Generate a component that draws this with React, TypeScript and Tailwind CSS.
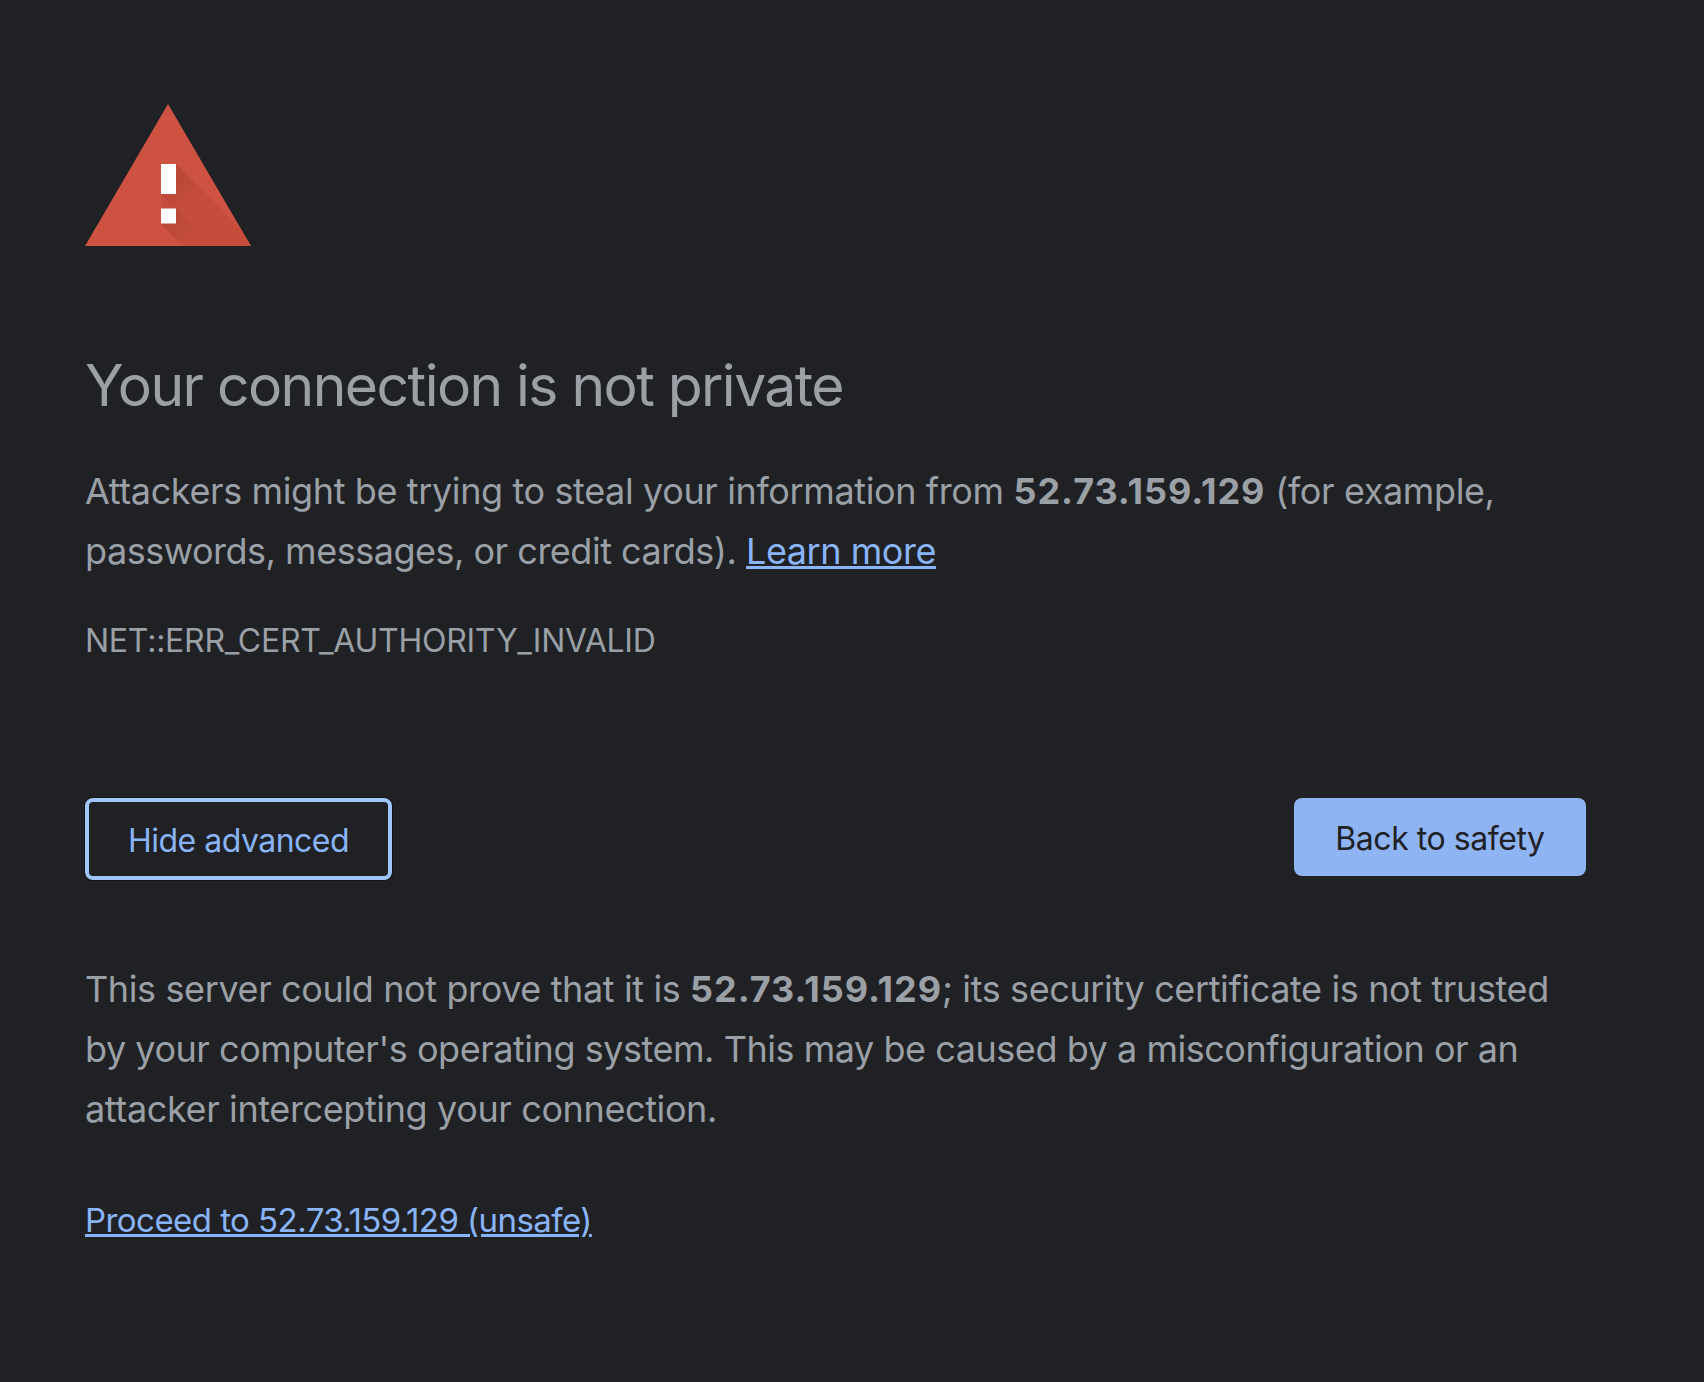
function WarningIcon() {
  return (
    <svg width="166" height="143" viewBox="0 0 166 143" className="block">
      <defs>
        <linearGradient id="barShadow" gradientUnits="userSpaceOnUse" x1="84" y1="75" x2="108" y2="99">
          <stop offset="0" stopColor="#b04434" stopOpacity="0.7" />
          <stop offset="1" stopColor="#b04434" stopOpacity="0" />
        </linearGradient>
        <linearGradient id="dotShadow" gradientUnits="userSpaceOnUse" x1="84" y1="112" x2="106" y2="134">
          <stop offset="0" stopColor="#b04434" stopOpacity="0.7" />
          <stop offset="1" stopColor="#b04434" stopOpacity="0" />
        </linearGradient>
      </defs>
      <polygon points="83,0 166,142 0,142" fill="#cd5241" />
      <polygon points="91,60 155,124 166,142 98,142 76,120 76,90" fill="#c64d3b" />
      <polygon points="91,60 121,90 106,120 76,90" fill="url(#barShadow)" />
      <polygon points="91,105 113,127 98.5,142 98,142 76,120" fill="url(#dotShadow)" />
      <rect x="76" y="60" width="15" height="30" fill="#ffffff" />
      <rect x="76" y="104.5" width="15" height="15" fill="#ffffff" />
    </svg>
  )
}

export default function App() {
  return (
    <div className="min-h-[1382px] bg-[#202124] px-[85px] pt-[104px] text-[#9aa0a6] font-['Inter','Liberation_Sans',sans-serif]">
      <WarningIcon />

      <h1 className="mt-[105px] text-[57px] leading-[68px] font-normal tracking-[-1.55px]">Your connection is not private</h1>

      <p className="mt-[41px] text-[36px] leading-[60px] tracking-[-0.38px] w-[1490px]">
        Attackers might be trying to steal your information from <strong className="font-bold tracking-[0.95px]">52.73.159.129</strong> (for example, <span className="tracking-[-0.49px]">passwords, messages, or credit cards).</span>{' '}
        <a href="#" className="text-[#8ab4f8] underline tracking-[-0.45px]">Learn more</a>
      </p>

      <div className="mt-[40px] text-[32px] leading-[40px] tracking-[-0.25px]">NET::ERR_CERT_AUTHORITY_INVALID</div>

      <div className="mt-[137px] flex items-start justify-between w-[1501px]">
        <button className="w-[307px] h-[82px] pt-[3px] rounded-lg border-[4px] border-[#a1c6fb] bg-[#202124] text-[32px] tracking-[-0.5px] text-[#8ab4f8] shadow-[0_0_0_1px_#121316]">Hide advanced</button>
        <button className="w-[292px] h-[78px] pt-[3px] rounded-lg bg-[#8fb4f4] text-[32px] tracking-[-0.45px] text-[#202124]">Back to safety</button>
      </div>

      <p className="mt-[79px] text-[36px] leading-[60px] tracking-[-0.38px] w-[1490px]">
        This server could not prove that it is <strong className="font-bold tracking-[0.95px]">52.73.159.129</strong>; its security certificate is not trusted <span className="tracking-[-0.46px]">by your computer's operating system. This may be caused by a misconfiguration or an</span> attacker intercepting your connection.
      </p>

      <p className="mt-[56px]">
        <a href="#" className="text-[33px] leading-[50px] tracking-[-0.55px] text-[#8ab4f8] underline">Proceed to 52.73.159.129 (unsafe)</a>
      </p>
    </div>
  )
}
